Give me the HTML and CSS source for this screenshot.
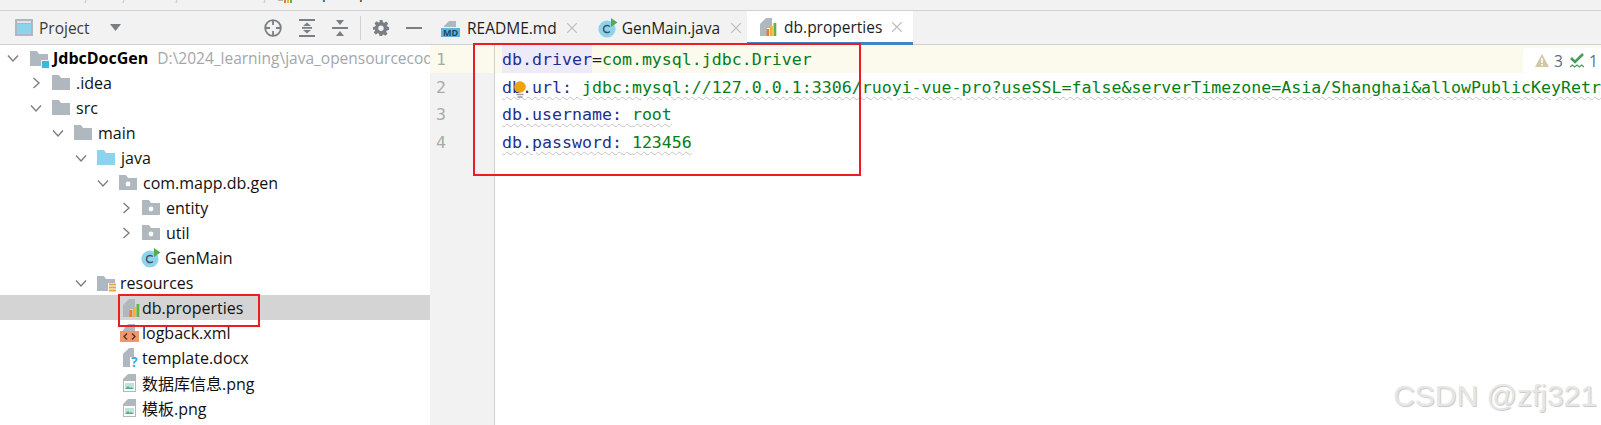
FILE: index.html
```html
<!DOCTYPE html>
<html lang="en">
<head>
<meta charset="utf-8">
<title>db.properties</title>
<link rel="stylesheet" href="styles.css">
</head>
<body>
<svg class="defs" width="0" height="0" aria-hidden="true">
  <defs>
    <symbol id="folder" viewBox="0 0 18 15"><path d="M0 0h7l2 3h9v12H0z" fill="#b0b8bf"/></symbol>
    <symbol id="pkg" viewBox="0 0 18 15"><path d="M0 0h7l2 3h9v12H0z" fill="#b0b8bf"/><circle cx="9" cy="9" r="2.4" fill="#fff"/></symbol>
    <symbol id="chev-r" viewBox="0 0 12 12"><path d="M3.5 1l5.5 5-5.5 5" fill="none" stroke="#7a7f85" stroke-width="1.4"/></symbol>
    <symbol id="chev-d" viewBox="0 0 12 12"><path d="M1 3.5l5 5.5 5-5.5" fill="none" stroke="#7a7f85" stroke-width="1.4"/></symbol>
    <symbol id="cls" viewBox="0 0 20 20"><circle cx="9" cy="11" r="8.6" fill="#8ed3ec"/><path d="M11.8 8.6a3.6 3.6 0 1 0 0 4.8" fill="none" stroke="#45535c" stroke-width="1.5"/><path d="M13 0l6.500 4.500-6.500 4.500z" fill="#4faf50"/></symbol>
    <symbol id="props" viewBox="0 0 17 19"><path d="M0 7l6-6h6v10H7v8H0z" fill="#b0b8bf"/><rect x="6.500" y="12" width="2.800" height="7" fill="#ee7b2c"/><rect x="10" y="9" width="2.800" height="10" fill="#f2b134"/><rect x="13.500" y="6" width="2.800" height="13" fill="#64b14a"/></symbol>
    <symbol id="file" viewBox="0 0 13 19"><path d="M0 6l5-5h8v18H0z" fill="#b0b8bf"/><path d="M1 8h11v10H1z" fill="#fff"/><path d="M2 10h9v6H2z" fill="#bfe3d6"/><path d="M2 16l3-3 2 2 1-1 3 2z" fill="#4faf8a"/></symbol>
  </defs>
</svg>
<div class="crumbs">
  <i class="slash s1"></i><i class="slash s2"></i><i class="slash s3"></i><i class="slash s4"></i>
  <svg class="crumb-bars" width="18" height="3" viewBox="0 0 18 3"><rect x="0" width="5" height="1" fill="#b0b8bf"/><rect x="6" width="2" height="3" fill="#ee7b2c"/><rect x="9" width="2" height="3" fill="#f2b134"/><rect x="12" width="2" height="3" fill="#64b14a"/></svg>
  <span class="crumb-text">p p</span>
</div>
<div class="main">
  <aside class="side">
    <div class="toolbar">
      <svg class="tw-icon" width="18" height="17" viewBox="0 0 18 17"><rect width="18" height="17" fill="#b0b8bf"/><rect x="2" y="5" width="14" height="10" fill="#8ed3ec"/><rect x="2" y="2" width="14" height="2" fill="#dfe3e6"/></svg>
      <span class="tw-title">Project</span>
      <svg class="tw-caret" width="11" height="7" viewBox="0 0 11 7"><path d="M0 0h11L5.500 7z" fill="#7a7f85"/></svg>
      <div class="tw-actions">
        <svg width="18" height="18" viewBox="0 0 18 18" fill="none" stroke="#7a7f85" stroke-width="1.800"><circle cx="9" cy="9" r="7.800"/><path d="M9 1v5M9 12v5M1 9h5M12 9h5"/></svg>
        <svg width="16" height="18" viewBox="0 0 16 18" fill="#7a7f85"><rect width="16" height="2"/><rect y="16" width="16" height="2"/><rect x="3" y="8" width="10" height="1.800"/><path d="M8 3.500l4 3.500H4zM8 14.500l-4-3.500h8z"/></svg>
        <svg width="16" height="18" viewBox="0 0 16 18" fill="#7a7f85"><rect y="8" width="16" height="2"/><path d="M4 1h8L8 6zM8 12l4 5H4z"/></svg>
        <i class="tw-sep"></i>
        <svg width="16" height="16" viewBox="0 0 16 16"><path d="M6.500 0h3l.4 2.200 1.400.6L13.200 1.500l2 2-1.300 1.900.6 1.400L16 7v3l-2.200.4-.6 1.400 1.300 1.900-2 2-1.900-1.300-1.400.6L9.500 16h-3l-.4-2.200-1.400-.6-1.900 1.300-2-2 1.300-1.900-.6-1.400L0 10V7l2.200-.4.600-1.400L1.500 3.300l2-2 1.900 1.300 1.400-.6z" fill="#7a7f85"/><circle cx="8" cy="8.300" r="2.700" fill="#f2f2f2"/></svg>
        <svg width="16" height="2" viewBox="0 0 16 2"><rect width="16" height="2" fill="#7a7f85"/></svg>
      </div>
    </div>
    <ul class="tree">
      <li class="row d0"><svg class="chev"><use href="#chev-d"/></svg>
        <svg class="ico root" width="19" height="17" viewBox="0 0 19 17"><path d="M0 0h7l2 3h9v12H0z" fill="#b0b8bf"/><rect x="11" y="9" width="8" height="8" fill="#f2f2f2"/><rect x="12" y="10" width="7" height="7" fill="#3fb4e5"/></svg>
        <span class="name bold">JdbcDocGen</span><span class="path">D:\2024_learning\java_opensourcecode\JdbcDocGen</span></li>
      <li class="row d1"><svg class="chev"><use href="#chev-r"/></svg><svg class="ico"><use href="#folder"/></svg><span class="name">.idea</span></li>
      <li class="row d1"><svg class="chev"><use href="#chev-d"/></svg><svg class="ico"><use href="#folder"/></svg><span class="name">src</span></li>
      <li class="row d2"><svg class="chev"><use href="#chev-d"/></svg><svg class="ico"><use href="#folder"/></svg><span class="name">main</span></li>
      <li class="row d3"><svg class="chev"><use href="#chev-d"/></svg><svg class="ico" viewBox="0 0 18 15"><path d="M0 0h7l2 3h9v12H0z" fill="#8ed3ec"/></svg><span class="name">java</span></li>
      <li class="row d4"><svg class="chev"><use href="#chev-d"/></svg><svg class="ico"><use href="#pkg"/></svg><span class="name">com.mapp.db.gen</span></li>
      <li class="row d5"><svg class="chev"><use href="#chev-r"/></svg><svg class="ico"><use href="#pkg"/></svg><span class="name">entity</span></li>
      <li class="row d5"><svg class="chev"><use href="#chev-r"/></svg><svg class="ico"><use href="#pkg"/></svg><span class="name">util</span></li>
      <li class="row d5"><span class="chev"></span><svg class="ico cls"><use href="#cls"/></svg><span class="name">GenMain</span></li>
      <li class="row d3"><svg class="chev"><use href="#chev-d"/></svg>
        <svg class="ico res" width="19" height="17" viewBox="0 0 19 17"><path d="M0 0h7l2 3h9v12H0z" fill="#b0b8bf"/><rect x="11" y="7" width="8" height="10" fill="#fff"/><path d="M12 8.500h7M12 11.500h7M12 14.500h7" stroke="#e3a93f" stroke-width="1.800"/></svg>
        <span class="name">resources</span></li>
      <li class="row d4 file selected"><span class="chev"></span><svg class="ico fi"><use href="#props"/></svg><span class="name">db.properties</span></li>
      <li class="row d4 file"><span class="chev"></span>
        <svg class="ico xml" width="19" height="19" viewBox="0 0 19 19"><path d="M3 7l5-6h7v7H3z" fill="#b0b8bf"/><rect y="8" width="19" height="11" fill="#f2966b"/><path d="M7 10.500l-3 3 3 3M12 10.500l3 3-3 3" fill="none" stroke="#45352c" stroke-width="1.300"/></svg>
        <span class="name">logback.xml</span></li>
      <li class="row d4 file"><span class="chev"></span>
        <svg class="ico fi" width="17" height="19" viewBox="0 0 17 19"><path d="M0 6l6-6h5v9H7v10H0z" fill="#b0b8bf"/><text class="qm" x="8" y="18.500">?</text></svg>
        <span class="name">template.docx</span></li>
      <li class="row d4 file"><span class="chev"></span><svg class="ico png"><use href="#file"/></svg><span class="name">数据库信息.png</span></li>
      <li class="row d4 file"><span class="chev"></span><svg class="ico png"><use href="#file"/></svg><span class="name">模板.png</span></li>
    </ul>
  </aside>
  <section class="editor">
    <div class="tabs">
      <div class="tab">
        <svg class="tab-ico" width="19" height="19" viewBox="0 0 19 19"><path d="M3 8l5-5h7v6H3z" fill="#b0b8bf"/><rect y="10" width="19" height="9" fill="#5fb4dd"/><text class="md" x="9.500" y="17.700">MD</text></svg>
        <span>README.md</span><svg class="close" width="10" height="10" viewBox="0 0 10 10"><path d="M0 0l10 10M10 0L0 10" stroke="#b9bdc1" stroke-width="1.200"/></svg>
      </div>
      <div class="tab">
        <svg class="tab-ico" width="20" height="20"><use href="#cls"/></svg>
        <span>GenMain.java</span><svg class="close" width="10" height="10" viewBox="0 0 10 10"><path d="M0 0l10 10M10 0L0 10" stroke="#b9bdc1" stroke-width="1.200"/></svg>
      </div>
      <div class="tab active">
        <svg class="tab-ico" width="17" height="19"><use href="#props"/></svg>
        <span>db.properties</span><svg class="close" width="10" height="10" viewBox="0 0 10 10"><path d="M0 0l10 10M10 0L0 10" stroke="#b9bdc1" stroke-width="1.200"/></svg>
      </div>
    </div>
    <div class="body">
      <div class="gutter">
        <div class="ln cur">1</div><div class="ln">2</div><div class="ln">3</div><div class="ln">4</div>
      </div>
      <div class="code">
        <div class="line cur"><span class="k hl">db.driver</span><span class="eq">=</span><span class="v">com.mysql.jdbc.Driver</span></div>
        <div class="line"><span class="wavy"><span class="k">db.url:</span> <span class="v">jdbc:mysql://127.0.0.1:3306/ruoyi-vue-pro?useSSL=false&amp;serverTimezone=Asia/Shanghai&amp;allowPublicKeyRetrieval=true</span></span></div>
        <div class="line"><span class="wavy"><span class="k">db.username:</span> <span class="v">root</span></span></div>
        <div class="line"><span class="wavy"><span class="k">db.password:</span> <span class="v">123456</span></span></div>
      </div>
      <svg class="bulb" width="14" height="18" viewBox="0 0 14 18"><circle cx="7" cy="6" r="5.800" fill="#f0a30a"/><path d="M3.500 13.500h7M4.500 16h5" stroke="#9aa0a5" stroke-width="1.300"/></svg>
      <div class="status">
        <svg width="14" height="13" viewBox="0 0 14 13"><path d="M7 0l7 13H0z" fill="#d2c8a4"/><path d="M6.200 4h1.600v5H6.200zM6.200 10h1.600v1.700H6.200z" fill="#fff"/></svg>
        <span>3</span>
        <svg class="st-check" width="14" height="16" viewBox="0 0 14 16" fill="none" stroke="#4a9a5b" stroke-width="2.600"><path d="M1 5l4 4 8-8"/><path d="M0 14l2.300-2 2.300 2 2.400-2 2.300 2 2.300-2 2.400 2" stroke-width="1.300"/></svg>
        <span>1</span>
      </div>
    </div>
  </section>
</div>
<div class="mark mark-code"></div>
<div class="mark mark-file"></div>
<div class="watermark">CSDN @zfj321</div>
</body>
</html>
```
FILE: styles.css
```css
* { box-sizing: border-box; }
html, body { margin: 0; height: 425px; overflow: hidden; }
body { position: relative; background: #fff; font-family: "Open Sans", "Noto Sans", "Noto Sans CJK SC", sans-serif; color: #1d1d1d; }
.defs { position: absolute; }

.crumbs { position: relative; height: 11px; background: #f2f2f2; border-bottom: 1px solid #d1d1d1; overflow: hidden; }
.slash { position: absolute; top: 0; width: 1px; height: 3px; background: #c4c4c4; transform: skewX(-20deg); }
.s1 { left: 85px; } .s2 { left: 123px; } .s3 { left: 176px; } .s4 { left: 264px; }
.crumb-bars { position: absolute; left: 278px; top: 0; }
.crumb-text { position: absolute; left: 322px; top: -18px; font-size: 15px; letter-spacing: 12px; white-space: pre; }

.main { display: flex; height: 414px; }
.side { width: 430px; flex: none; overflow: hidden; }
.toolbar { height: 34px; background: #f2f2f2; border-bottom: 1px solid #d1d1d1; display: flex; align-items: center; padding-left: 15px; }
.tw-title { margin-left: 6px; font-size: 15.500px; color: #3a3a3a; }
.tw-caret { margin-left: 20px; }
.tw-actions { margin-left: auto; margin-right: 8px; display: flex; align-items: center; gap: 17px; }
.tw-sep { width: 1px; height: 24px; background: #d1d1d1; margin: 0 -5px 0 -5px; }

.tree { list-style: none; margin: 0; padding: 0; }
.row { height: 25px; display: flex; align-items: center; white-space: nowrap; font-size: 16px; color: #111; overflow: hidden; }
.d0 { padding-left: 7px; } .d1 { padding-left: 30px; } .d2 { padding-left: 52px; }
.d3 { padding-left: 75px; } .d4 { padding-left: 97px; } .d5 { padding-left: 120px; }
.chev { width: 12px; height: 12px; flex: none; }
.ico { width: 18px; height: 15px; flex: none; margin-left: 10px; margin-right: 6px; }
.ico.root { width: 19px; height: 17px; margin-left: 11px; margin-right: 4px; margin-top: 3px; }
.ico.res { width: 19px; height: 17px; margin-left: 10px; margin-right: 4px; margin-top: 3px; }
.ico.cls { width: 20px; height: 20px; margin-right: 4px; margin-left: 9px; }
.ico.fi { width: 17px; height: 19px; margin-left: 14px; margin-right: 2px; }
.ico.xml { width: 19px; height: 19px; margin-left: 11px; margin-right: 3px; margin-top: 0; }
.ico.png { width: 13px; height: 19px; margin-left: 14px; margin-right: 6px; }
.bold { font-weight: 700; color: #000; }
.path { margin-left: 9px; color: #a3a7ab; font-size: 15.500px; }
.selected { background: #d4d4d4; }
.qm { font: 700 14px "Open Sans", sans-serif; fill: #3fa9dc; }

.editor { flex: 1; min-width: 0; display: flex; flex-direction: column; }
.tabs { height: 34px; background: #f2f2f2; border-bottom: 1px solid #d1d1d1; display: flex; }
.tab { height: 33px; display: flex; align-items: center; padding-left: 11px; font-size: 15.500px; color: #1d1d1d; }
.tab span { margin-left: 7px; }
.tab .close { margin-left: 10px; margin-right: 11px; }
.tab:nth-child(2) { padding-left: 10px; }
.tab:nth-child(2) span { margin-left: 4px; }
.tab:nth-child(2) .close { margin-left: 11px; margin-right: 6px; }
.tab.active { background: #fff; border-bottom: 3px solid #4083c9; padding-left: 13px; height: 34px; width: 166px; }
.tab-ico { flex: none; }
.md { font: 700 9px "Open Sans", sans-serif; fill: #26455c; text-anchor: middle; }

.body { position: relative; flex: 1; display: flex; }
.gutter { width: 65px; flex: none; background: #f2f2f2; border-right: 1px solid #d1d1d1; }
.ln, .line { height: 27.600px; padding-top: 1px; line-height: 27.600px; font-family: "DejaVu Sans Mono", "Liberation Mono", monospace; font-size: 16.600px; }
.ln { padding-left: 6px; color: #a8abad; }
.ln.cur { background: #fcfaed; }
.code { flex: 1; min-width: 0; overflow: hidden; }
.line { padding-left: 7px; white-space: pre; }
.line.cur { background: #fcfaed; }
.k { color: #1d2f8f; }
.hl { background: #edebfa; box-shadow: 0 -1px 0 #edebfa; display: inline-block; height: 26.600px; }
.eq { color: #1d1d1d; }
.v { color: #067d17; }
.wavy { text-decoration: underline wavy #c4c4c4 1px; text-underline-offset: 3px; }
.bulb { position: absolute; left: 83px; top: 36px; }
.status { position: absolute; right: 0; top: 3px; width: 78px; height: 25px; background: #fff; border-radius: 4px 0 0 0; display: flex; align-items: center; gap: 5px; padding-left: 12px; font-size: 15.500px; color: #5d6b7a; }
.st-check { margin-left: 2px; }

.mark { position: absolute; border: 2px solid #ed1c24; pointer-events: none; }
.mark-code { left: 473px; top: 43px; width: 388px; height: 133px; }
.mark-file { left: 118px; top: 294px; width: 142px; height: 33px; }
.watermark { position: absolute; right: 4px; bottom: 12px; font-family: "Liberation Sans", sans-serif; font-size: 30px; line-height: 34px; color: #e6e6e6; text-shadow: 1px 1px 1px #c8c8c8; }
```
